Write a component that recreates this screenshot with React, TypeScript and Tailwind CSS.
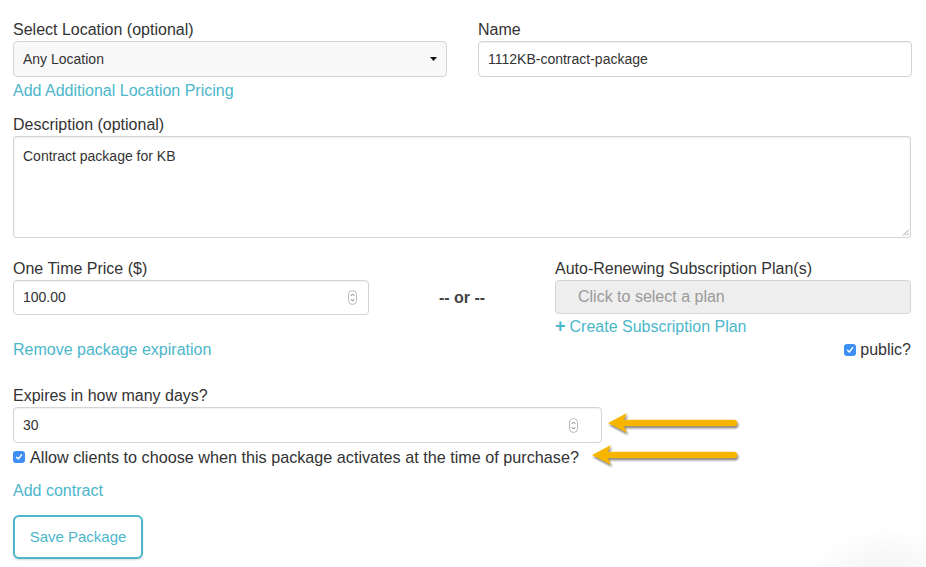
import React from 'react';

const font = { fontFamily: '"Liberation Sans", Arial, sans-serif' };

const Label: React.FC<{ children: React.ReactNode }> = ({ children }) => (
  <div className="h-[20px] leading-[22px] text-[16px] text-[#333] mb-[2px]">{children}</div>
);

const Link: React.FC<{ children: React.ReactNode; className?: string }> = ({ children, className = '' }) => (
  <a className={`block h-[22px] leading-[24px] text-[16px] text-[#4bb7cb] ${className}`}>{children}</a>
);

const Spinner = () => (
  <svg width="9" height="15" viewBox="0 0 9 15" className="shrink-0">
    <rect x="0.5" y="0.5" width="8" height="14" rx="4" fill="#fff" stroke="#bbb" />
    <path d="M2.8 5.8 L4.5 4 L6.2 5.8" fill="none" stroke="#666" strokeWidth="0.9" />
    <path d="M2.8 9.2 L4.5 11 L6.2 9.2" fill="none" stroke="#666" strokeWidth="0.9" />
  </svg>
);

const Checkbox = () => (
  <span className="inline-flex items-center justify-center w-[12px] h-[12px] rounded-[3px] bg-[#3d8ef5] shrink-0">
    <svg width="8" height="8" viewBox="0 0 8 8">
      <path d="M1.5 4.2 L3.3 6 L6.6 1.8" fill="none" stroke="#fff" strokeWidth="1.4" strokeLinecap="round" strokeLinejoin="round" />
    </svg>
  </span>
);

const Arrow: React.FC<{ width: number }> = ({ width }) => (
  <svg width={width} height="26" viewBox={`0 0 ${width} 26`} className="shrink-0 drop-shadow-[1px_2px_1px_rgba(0,0,0,0.5)]">
    <line x1="16" y1="11" x2={width - 5} y2="11" stroke="#f7b500" strokeWidth="6.5" strokeLinecap="round" />
    <path d="M1 11 L20 1 L15.5 11 L20 21 Z" fill="#f7b500" />
  </svg>
);

export default function App() {
  return (
    <div style={font} className="relative w-[926px] h-[567px] bg-white overflow-hidden pl-[13px] pr-[15px] pt-[19px]">
      {/* location / name */}
      <div className="grid grid-cols-[434px_434px] gap-x-[31px]">
        <div>
          <Label>Select Location (optional)</Label>
          <div className="flex items-center justify-between h-[36px] px-[9px] rounded-[4px] border border-[#d4d4d4] bg-[#f8f8f8] text-[14px] text-[#333]">
            <span className="pt-[1px]">Any Location</span>
            <svg width="7" height="4" viewBox="0 0 7 4"><path d="M0 0 L7 0 L3.5 4 Z" fill="#111" /></svg>
          </div>
          <Link className="mt-[2px] text-[16.3px]">Add Additional Location Pricing</Link>
        </div>
        <div>
          <Label>Name</Label>
          <div className="flex items-center h-[36px] px-[9px] rounded-[4px] border border-[#d4d4d4] bg-white shadow-[inset_0_1px_1px_rgba(0,0,0,0.06)] text-[14px] text-[#333]">
            <span className="pt-[1px]">1112KB-contract-package</span>
          </div>
        </div>
      </div>

      {/* description */}
      <div className="mt-[13px]">
        <Label>Description (optional)</Label>
        <div className="relative h-[102px] px-[9px] pt-[9px] rounded-[3px] border border-[#d4d4d4] shadow-[inset_0_1px_2px_rgba(0,0,0,0.08)] text-[14px] text-[#333]">
          Contract package for KB
          <svg width="7" height="7" viewBox="0 0 7 7" className="absolute right-[1px] bottom-[1px]">
            <path d="M6.5 1 L1 6.5 M6.5 4 L4 6.5" stroke="#888" strokeWidth="0.8" />
          </svg>
        </div>
      </div>

      {/* price row */}
      <div className="grid grid-cols-[356px_186px_356px] mt-[20px]">
        <div>
          <Label>One Time Price ($)</Label>
          <div className="flex items-center justify-between h-[35px] pl-[9px] pr-[11px] rounded-[4px] border border-[#d4d4d4] shadow-[inset_0_1px_1px_rgba(0,0,0,0.06)] text-[14px] text-[#333]">
            <span>100.00</span>
            <Spinner />
          </div>
        </div>
        <div className="pt-[22px]">
          <div className="flex items-center justify-center h-[35px] text-[16px] font-bold text-[#444]">-- or --</div>
        </div>
        <div>
          <Label>Auto-Renewing Subscription Plan(s)</Label>
          <div className="flex items-center h-[34px] pl-[22px] rounded-[4px] border border-[#d4d4d4] bg-[#eeeeee] text-[16px] text-[#9a9a9a]">
            Click to select a plan
          </div>
          <a className="block h-[22px] leading-[22px] mt-[1px] text-[16px] text-[#4bb7cb]">
            <span className="font-bold text-[18px] mr-[4px]">+</span>Create Subscription Plan
          </a>
        </div>
      </div>

      {/* expiration toggle + public */}
      <div className="flex items-start justify-between mt-[1px]">
        <Link>Remove package expiration</Link>
        <label className="flex items-center gap-[4px] text-[16px] text-[#333] h-[22px] mt-[1px]">
          <Checkbox />
          <span>public?</span>
        </label>
      </div>

      {/* expires */}
      <div className="mt-[24px]">
        <Label>Expires in how many days?</Label>
        <div className="flex items-center justify-between w-[726px]">
          <div className="flex items-center justify-between w-[589px] h-[36px] pl-[9px] pr-[23px] rounded-[4px] border border-[#d4d4d4] shadow-[inset_0_1px_1px_rgba(0,0,0,0.06)] text-[14px] text-[#333]">
            <span className="pt-[1px]">30</span>
            <Spinner />
          </div>
          <Arrow width={132} />
        </div>
        <div className="flex items-center justify-between w-[726px] mt-[3px] h-[22px]">
          <label className="flex items-center gap-[5px] text-[16.2px] text-[#333]">
            <Checkbox />
            <span>Allow clients to choose when this package activates at the time of purchase?</span>
          </label>
          <Arrow width={148} />
        </div>
      </div>

      <Link className="mt-[11px]">Add contract</Link>

      <button className="mt-[14px] w-[130px] h-[44px] rounded-[6px] border-2 border-[#4bb7cb] bg-white text-[15px] text-[#4bb7cb] shadow-[0_1px_2px_rgba(0,0,0,0.15)]">
        Save Package
      </button>

      {/* faint shadow blob in the corner */}
      <div className="absolute right-[-40px] bottom-[-60px] w-[160px] h-[100px] rounded-full bg-[radial-gradient(ellipse_at_center,rgba(0,0,0,0.05),rgba(0,0,0,0)_70%)]" />
    </div>
  );
}
